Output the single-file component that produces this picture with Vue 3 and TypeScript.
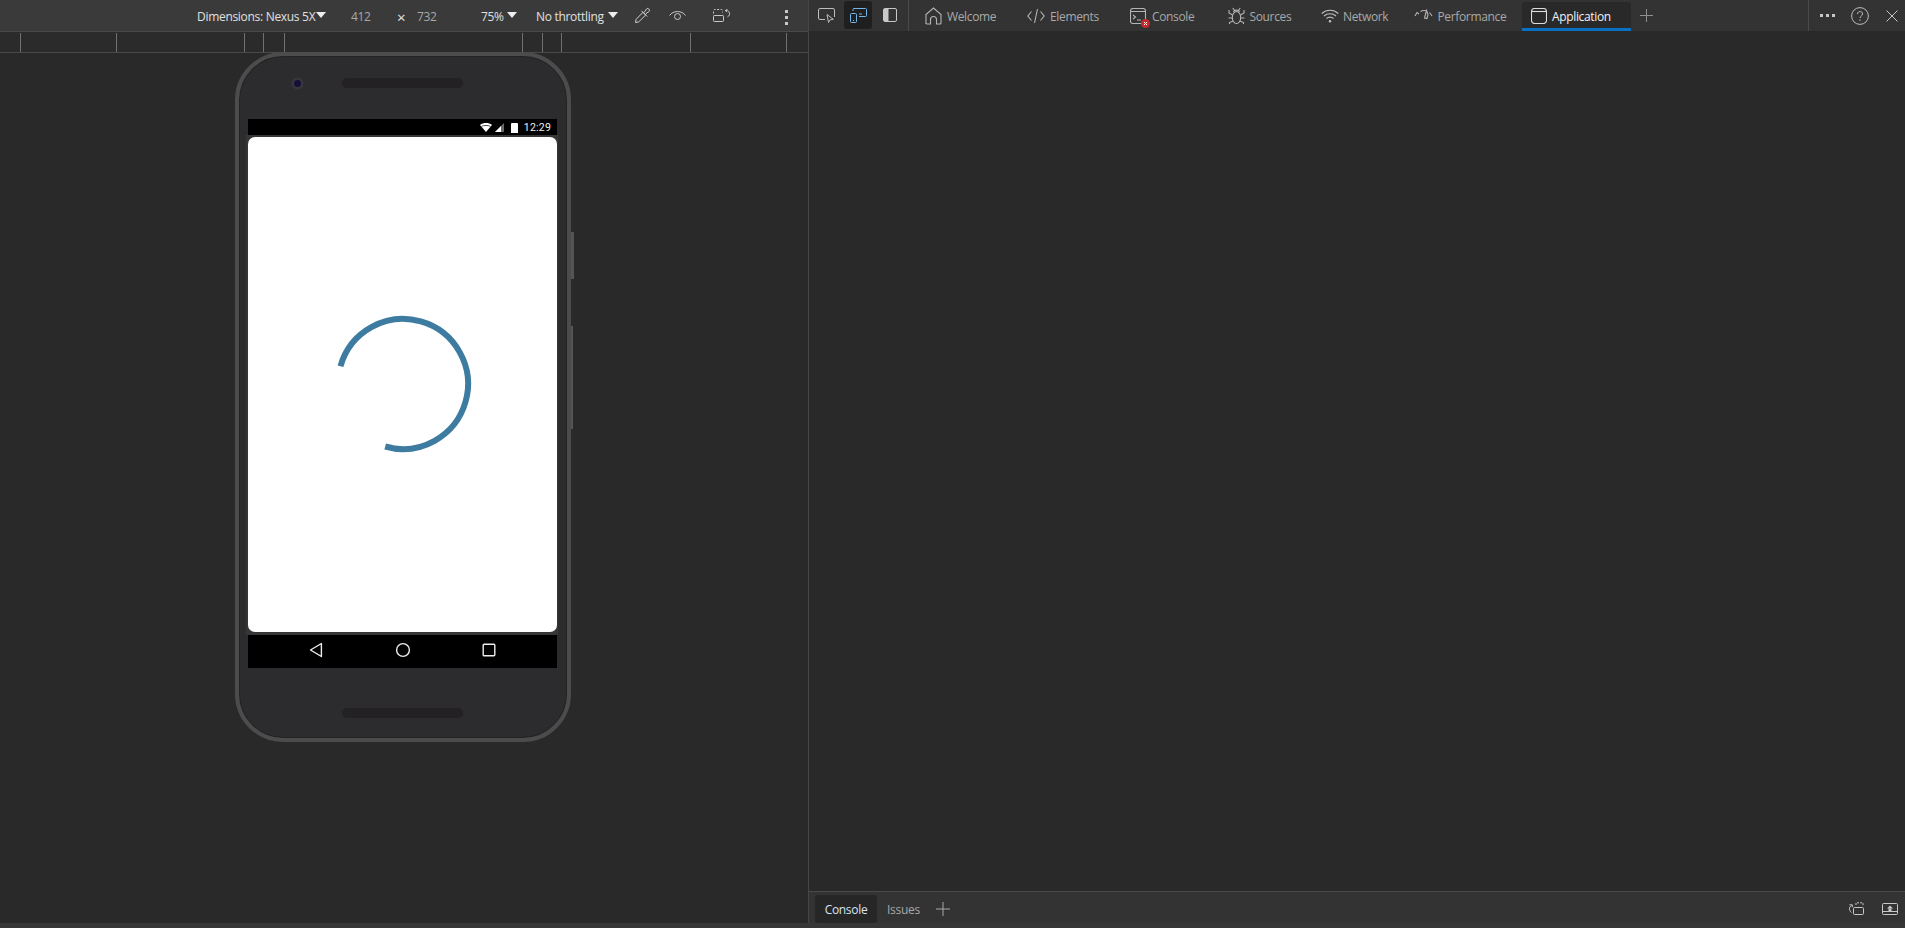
<script setup lang="ts">
const ticks: number[] = [20, 116, 244, 263, 284, 522, 542, 561, 690, 786]
</script>

<template>
  <div class="root">
    <div class="main">
      <section class="emu">
        <div class="emu-bar">
          <span class="t lab dim">Dimensions: Nexus 5X</span>
          <span class="tri tri1"></span>
          <span class="t num n1">412</span>
          <span class="t times">×</span>
          <span class="t num n2">732</span>
          <span class="t lab pct">75%</span>
          <span class="tri tri2"></span>
          <span class="t lab thr">No throttling</span>
          <span class="tri tri3"></span>
          <svg class="ic drop" width="17" height="17" viewBox="0 0 17 17" fill="none" stroke="#cfcfcf" stroke-width="1">
            <path d="M1.500 15.500l.6-3.200 6.900-7 2.700 2.700-7 6.900z" />
            <path d="M7.500 3.800l5.700 5.700" />
            <path d="M10 5.500l2.800-3.800c1-1.200 3.600 1.300 2.500 2.500L11.500 7" />
          </svg>
          <svg class="ic eye" width="17" height="11" viewBox="0 0 17 11" fill="none" stroke="#c8c8c8" stroke-width="1">
            <path d="M.6 5.500C4 .2 13 .2 16.400 5.500" />
            <circle cx="8.500" cy="6.500" r="3" />
          </svg>
          <svg class="ic rot" width="18" height="13" viewBox="0 0 18 13" fill="none" stroke="#c8c8c8" stroke-width="1">
            <rect x=".5" y="6.500" width="10" height="6" rx=".8" />
            <path d="M.5 4.500V1.500a1 1 0 0 1 1-1h7a1 1 0 0 1 1 1v2" stroke-dasharray="2 1.500" />
            <path d="M12.500 1.500c2.800-.3 4.600 1.500 4 4.200-.3 1-1 1.700-2 2.100" />
            <path d="M14.500 .2l-2.200 1.300 1.800 1.600" />
          </svg>
          <span class="vdots"><i></i><i></i><i></i></span>
        </div>
        <div class="ruler">
          <span v-for="x in ticks" :key="x" class="tick" :style="{ left: x + 'px' }"></span>
        </div>
        <div class="stage">
          <div class="phone">
            <span class="btn-a"></span>
            <span class="btn-b"></span>
            <div class="top-bezel">
              <span class="camera"></span>
              <span class="speaker"></span>
            </div>
            <div class="statusbar">
              <svg width="12" height="9" viewBox="0 0 12 9"><path d="M0 2C3.300-.6 8.700-.6 12 2L6 9z" fill="#fff" /><path d="M1.500 3.400c2.700-1.300 6.300-1.300 9 0" stroke="#000" stroke-width=".7" fill="none" /></svg>
              <svg class="sig" width="9" height="9" viewBox="0 0 9 9"><path d="M9 0v9H0z" fill="#6a6a6a" /><path d="M6 3v6H0z" fill="#fff" /></svg>
              <span class="batt"></span>
              <span class="clock">12:29</span>
            </div>
            <div class="screen-wrap">
              <div class="screen">
                <svg width="150" height="150" viewBox="0 0 150 150" fill="none">
                  <path d="M12.500 57.200A65 65 0 1 1 57.200 137.500" stroke="#3d7ca0" stroke-width="6" />
                </svg>
              </div>
            </div>
            <div class="navbar">
              <svg width="14" height="16" viewBox="0 0 14 16" fill="none" stroke="#eee" stroke-width="1.400"><path d="M12.400 1.500v13L1.500 8z" stroke-linejoin="round" /></svg>
              <svg width="16" height="16" viewBox="0 0 16 16" fill="none" stroke="#eee" stroke-width="1.400"><circle cx="8" cy="8" r="6.400" /></svg>
              <svg width="14" height="14" viewBox="0 0 14 14" fill="none" stroke="#eee" stroke-width="1.400"><rect x="1.200" y="1.200" width="11.600" height="11.600" rx="1" /></svg>
            </div>
            <div class="bottom-bezel"><span class="speaker"></span></div>
          </div>
        </div>
      </section>

      <section class="tools">
        <nav class="tabs">
          <div class="tool-group">
            <span class="tool">
              <svg width="17" height="15" viewBox="0 0 17 15" fill="none" stroke="#bdbdbd"><path d="M7 11.500H2A1.500 1.500 0 0 1 .5 10V2A1.500 1.500 0 0 1 2 .5h13A1.500 1.500 0 0 1 16.500 2v7" /><path d="M9 6.500l1.500 8 1.700-2.700 3.100-.5z" /></svg>
            </span>
            <span class="tool on">
              <svg width="17" height="15" viewBox="0 0 17 15" fill="none" stroke="#73b6ec"><rect x=".5" y="5.500" width="6" height="9" rx="1" /><path d="M3 3V1.500a1 1 0 0 1 1-1h11.500a1 1 0 0 1 1 1v6a1 1 0 0 1-1 1H9" /><path d="M9 6h3M3 12.500h1" /></svg>
            </span>
            <span class="tool">
              <svg width="14" height="14" viewBox="0 0 14 14"><rect x=".5" y=".5" width="13" height="13" rx="1.500" fill="none" stroke="#c8c8c8" /><path d="M1 1h4.500v12H1z" fill="#c8c8c8" /></svg>
            </span>
          </div>
          <span class="tab w-welcome">
            <svg width="17" height="18" viewBox="0 0 17 18" fill="none" stroke="#b5b5b5" stroke-width="1.100"><path d="M1 17V7.500L8.500 1 16 7.500V16a1 1 0 0 1-1 1h-3.500v-4.500a3 3 0 0 0-6 0V17H2a1 1 0 0 1-1-1z" /></svg>
            <span class="lbl">Welcome</span>
          </span>
          <span class="tab w-elements">
            <svg width="18" height="16" viewBox="0 0 18 16" fill="none" stroke="#b5b5b5" stroke-width="1.100"><path d="M4.500 3.500L.8 8l3.700 4.500M13.500 3.500L17.200 8l-3.700 4.500M10.500 1L7.500 15" /></svg>
            <span class="lbl">Elements</span>
          </span>
          <span class="tab w-console">
            <span class="con-ic">
              <svg width="16" height="16" viewBox="0 0 16 16" fill="none" stroke="#b5b5b5" stroke-width="1.100"><rect x=".5" y=".5" width="15" height="15" rx="2.500" /><path d="M.5 3.500h15M3 7l2.500 2L3 11M7 12h4" /></svg>
              <svg class="err" width="9" height="9" viewBox="0 0 9 9"><circle cx="4.500" cy="4.500" r="4.500" fill="#c42b2b" /><path d="M3 3l3 3M6 3L3 6" stroke="#fff" /></svg>
            </span>
            <span class="lbl">Console</span>
          </span>
          <span class="tab w-sources">
            <svg width="17" height="18" viewBox="0 0 17 18" fill="none" stroke="#b5b5b5" stroke-width="1.100"><ellipse cx="8.500" cy="10.500" rx="4.200" ry="6" /><path d="M5.500 4.800C6 2.500 11 2.500 11.500 4.800M4.800 1l1.700 2.500M12.200 1l-1.700 2.500M4.500 8L1 6V3M12.500 8L16 6V3M4.300 11H.5M12.700 11h3.800M5 14l-3.500 1.500V17M12 14l3.500 1.500V17" /></svg>
            <span class="lbl">Sources</span>
          </span>
          <span class="tab w-network">
            <svg width="18" height="14" viewBox="0 0 18 14" fill="none" stroke="#c0c0c0" stroke-width="1.100"><path d="M.7 4.500c4.700-4.300 11.900-4.300 16.600 0M3 7c3.300-3 8.700-3 12 0M5.500 9.500c2-1.600 5-1.600 7 0" /><circle cx="9" cy="12.200" r="1.200" fill="#c0c0c0" stroke="none" /></svg>
            <span class="lbl">Network</span>
          </span>
          <span class="tab w-perf">
            <svg width="19" height="13" viewBox="0 0 19 13" fill="none" stroke="#b5b5b5" stroke-width="1.100"><path d="M1 7l2-3.500L5 5M6.500 2.500C8.500 1.300 11 1.300 13 2" /><path d="M12.500 1.500L10.500 9l2.500.5 1-4z" /><path d="M15.500 3.500L18 7" /></svg>
            <span class="lbl">Performance</span>
          </span>
          <span class="tab active w-app">
            <svg width="16" height="16" viewBox="0 0 16 16" fill="none" stroke="#dcdcdc" stroke-width="1.100"><rect x=".5" y=".5" width="15" height="15" rx="3" /><path d="M.5 3.500h15" /></svg>
            <span class="lbl">Application</span>
          </span>
          <svg class="plus top" width="13" height="13" viewBox="0 0 13 13" stroke="#909090"><path d="M6.500 0v13M0 6.500h13" /></svg>
          <div class="end">
            <span class="hdots"><i></i><i></i><i></i></span>
            <svg width="18" height="18" viewBox="0 0 18 18" fill="none" stroke="#bdbdbd"><circle cx="9" cy="9" r="8.400" /><path d="M6.500 7c0-3.300 5.200-3.300 5 0 0 2-2.500 2-2.500 4M9 12.500v1.500" /></svg>
            <svg class="x" width="12" height="12" viewBox="0 0 12 12" stroke="#c8c8c8"><path d="M.5.500l11 11M11.500.500l-11 11" /></svg>
          </div>
        </nav>
        <div class="panel"></div>
        <div class="drawer">
          <span class="dtab on">Console</span>
          <span class="dtab">Issues</span>
          <svg class="plus" width="14" height="14" viewBox="0 0 14 14" stroke="#a8a8a8"><path d="M7 0v14M0 7h14" /></svg>
          <div class="end dend">
            <svg width="16" height="13" viewBox="0 0 16 13" fill="none" stroke="#c8c8c8"><rect x="5.500" y="5.500" width="10" height="7" rx="1" /><path d="M8 3V.8h7V4" stroke-dasharray="2 1.200" /><path d="M3.500 3.500C.800 5 .800 8.500 3.500 10.500" /><path d="M1.500 2.800h2.800v2.400" /></svg>
            <svg width="16" height="12" viewBox="0 0 16 12" fill="none" stroke="#c8c8c8"><rect x=".5" y=".5" width="15" height="11" rx="1" /><path d="M.5 8.500h15" /><path d="M8 2.500l3 3H5z" fill="#c8c8c8" stroke="none" /><path d="M6.500 5.500h3v3h-3z" fill="#c8c8c8" stroke="none" /></svg>
          </div>
        </div>
      </section>
    </div>
    <div class="foot"></div>
  </div>
</template>

<style>
html, body { margin: 0; background: #292929; overflow: hidden; }
</style>

<style scoped>
.root {
  display: flex;
  flex-direction: column;
  width: 1905px;
  height: 928px;
  overflow: hidden;
  background: #292929;
  font-family: "Open Sans", "Noto Sans", "Liberation Sans", sans-serif;
  font-size: 12px;
  letter-spacing: -.3px;
  color: #d0d0d0;
}
.main { flex: 1; min-height: 0; display: flex; }
.foot { height: 5px; flex: none; background: #363636; }
.emu {
  width: 808px;
  flex: none;
  display: flex;
  flex-direction: column;
  border-right: 1px solid #464646;
  box-sizing: content-box;
}
.emu-bar {
  position: relative;
  height: 32px;
  flex: none;
  background: #3a3a3a;
  border-bottom: 1px solid #4a4a4a;
  box-sizing: border-box;
}
.t, .tri, .ic, .vdots { position: absolute; }
.t { top: 9px; line-height: 15px; white-space: nowrap; }
.lab { color: #e0e0e0; }
.num { color: #a8a8a8; }
.dim { left: 197px; }
.n1 { left: 351px; }
.times { left: 397px; top: 10px; font-size: 15px; color: #e8e8e8; }
.n2 { left: 417px; }
.pct { left: 481px; }
.thr { left: 536px; }
.tri {
  top: 12px;
  width: 0;
  height: 0;
  border-left: 5px solid transparent;
  border-right: 5px solid transparent;
  border-top: 6px solid #eee;
}
.tri1 { left: 316px; }
.tri2 { left: 507px; }
.tri3 { left: 608px; }
.drop { left: 634px; top: 7px; }
.eye { left: 669px; top: 10px; }
.rot { left: 713px; top: 9px; }
.vdots {
  left: 785px;
  top: 10px;
  display: flex;
  flex-direction: column;
  gap: 3.500px;
}
.vdots i, .hdots i {
  display: block;
  width: 2.500px;
  height: 2.500px;
  background: #c8c8c8;
}
.ruler {
  position: relative;
  height: 21px;
  flex: none;
  background: #2b2b2b;
  border-bottom: 1px solid #4a4a4a;
  box-sizing: border-box;
}
.tick {
  position: absolute;
  top: 1px;
  bottom: 0;
  width: 1px;
  background: #707070;
}
.stage {
  flex: 1;
  position: relative;
  background: #292929;
}
.phone {
  position: relative;
  margin: -1px 0 0 235px;
  width: 336px;
  height: 690px;
  box-sizing: border-box;
  border: 4px solid #4c4c4c;
  border-radius: 48px;
  background: #2c2b2d;
  box-shadow: inset 0 0 0 1px #232323;
  display: flex;
  flex-direction: column;
  align-items: center;
}
.btn-a, .btn-b {
  position: absolute;
  left: 332px;
  background: #555;
}
.btn-a { top: 176px; width: 3px; height: 47px; }
.btn-b { top: 270px; width: 2px; height: 103px; }
.top-bezel {
  position: relative;
  width: 100%;
  height: 63px;
  flex: none;
}
.camera {
  position: absolute;
  left: 55px;
  top: 24px;
  width: 7px;
  height: 7px;
  border-radius: 50%;
  background: #15103a;
  box-shadow: 0 0 0 2.500px #38373c;
}
.speaker {
  position: absolute;
  left: 103px;
  width: 121px;
  height: 10px;
  border-radius: 5px;
  background: #232123;
  top: 22px;
}
.statusbar {
  width: 309px;
  height: 16px;
  flex: none;
  margin-right: 1px;
  background: #000;
  display: flex;
  align-items: center;
  justify-content: flex-end;
  padding: 1px 6px 0 0;
  box-sizing: border-box;
}
.sig { margin-left: 3px; }
.batt {
  width: 7px;
  height: 10px;
  background: #fff;
  margin-left: 7px;
  border-radius: 1px 1px 0 0;
}
.clock {
  margin-left: 6px;
  color: #eee;
  font-family: Roboto, sans-serif;
  font-size: 10.500px;
  letter-spacing: .2px;
}
.screen-wrap {
  width: 312px;
  height: 500px;
  flex: none;
  margin-right: 2px;
  background: #363636;
  box-sizing: border-box;
  padding: 2px 1px 3px 2px;
}
.screen {
  height: 495px;
  width: 309px;
  background: #fff;
  border-radius: 7px;
  display: flex;
  justify-content: center;
  padding-top: 172px;
  box-sizing: border-box;
}
.screen svg { margin-left: 1px; }
.navbar {
  width: 309px;
  height: 33px;
  flex: none;
  margin-right: 1px;
  background: #000;
  display: flex;
  align-items: center;
  justify-content: center;
  gap: 71.500px;
  padding-bottom: 3px;
  box-sizing: border-box;
}
.bottom-bezel {
  position: relative;
  width: 100%;
  flex: 1;
}
.bottom-bezel .speaker { top: 40px; }

.tools {
  flex: 1;
  min-width: 0;
  display: flex;
  flex-direction: column;
}
.tabs {
  height: 31px;
  flex: none;
  background: #333;
  display: flex;
  align-items: center;
  position: relative;
  color: #a9a9a9;
  letter-spacing: -.35px;
}
.tool-group {
  display: flex;
  align-items: center;
  height: 31px;
  width: 100px;
  flex: none;
  padding: 0 0 1px 3px;
  box-sizing: border-box;
  border-right: 1px solid #4a4a4a;
  gap: 4px;
}
.tool {
  width: 28px;
  height: 28px;
  display: flex;
  align-items: center;
  justify-content: center;
  border-radius: 3px;
}
.tool.on { background: #1f1f1f; }
.tab {
  height: 31px;
  display: flex;
  align-items: center;
  gap: 5px;
  box-sizing: border-box;
  flex: none;
  white-space: nowrap;
}
.lbl { padding-top: 2px; }
.w-welcome { margin-left: 16px; width: 102px; }
.w-elements { width: 103px; }
.w-console { width: 98px; gap: 6px; }
.w-sources { width: 92.500px; gap: 4.500px; }
.w-network { width: 93px; gap: 4.500px; }
.w-perf { width: 108.500px; }
.w-app { width: 109px; padding-left: 8.500px; }
.tab.active {
  background: #292929;
  color: #f2f2f2;
  border-bottom: 3px solid #0a70c2;
  border-radius: 3px 3px 0 0;
  height: 29px;
  margin-top: 2px;
  padding-top: 1px;
  gap: 5.500px;
}
.con-ic { position: relative; display: flex; }
.err {
  position: absolute;
  right: -4px;
  bottom: -4px;
}
.plus.top { margin-left: 9px; }
.end {
  position: absolute;
  right: 0;
  top: 0;
  height: 100%;
  display: flex;
  align-items: center;
}
.tabs .end {
  width: 97px;
  gap: 16.500px;
  padding-left: 12px;
  box-sizing: border-box;
}
.tabs .end::before {
  content: "";
  position: absolute;
  left: 0;
  top: 0;
  bottom: 0;
  width: 1px;
  background: #4a4a4a;
}
.hdots { display: flex; gap: 3.500px; }
.panel { flex: 1; background: #292929; }
.drawer {
  height: 32px;
  flex: none;
  background: #333;
  border-top: 1px solid #4a4a4a;
  display: flex;
  align-items: center;
  position: relative;
  box-sizing: border-box;
  color: #a9a9a9;
}
.dtab {
  height: 28px;
  margin-top: 2px;
  padding: 2px 10px 0;
  display: flex;
  align-items: center;
  box-sizing: border-box;
}
.dtab:first-child { margin-left: 6px; }
.dtab.on {
  width: 62px;
  justify-content: center;
  padding: 2px 0 0;
  background: #262626;
  color: #d8e4f4;
  border-radius: 3px;
}
.drawer .plus { margin: 3px 0 0 6px; }
.dend { gap: 18px; padding: 1px 7px 0 0; }
</style>
